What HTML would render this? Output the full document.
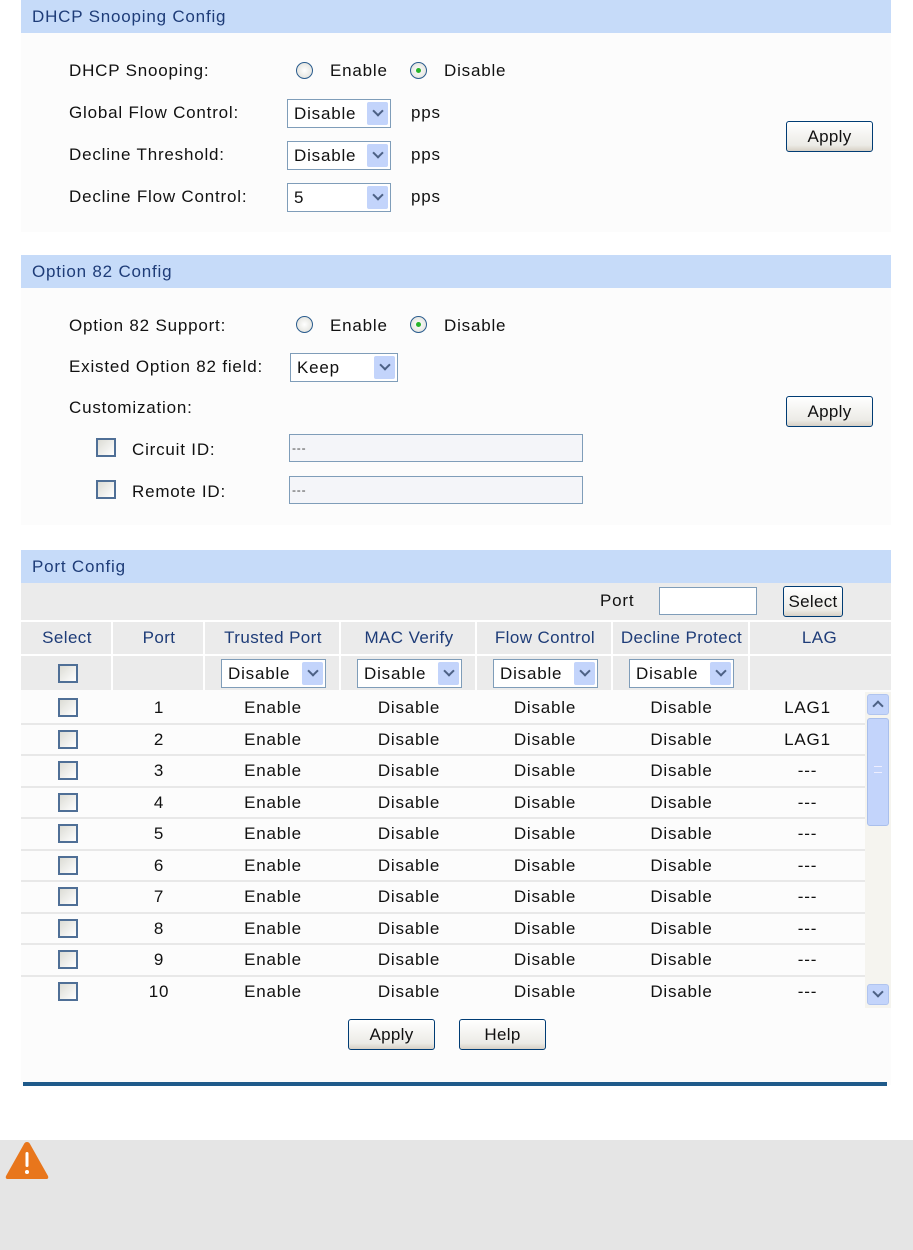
<!DOCTYPE html>
<html><head><meta charset="utf-8"><style>
*{margin:0;padding:0;box-sizing:border-box}
body{width:913px;height:1250px;background:#fff;font-family:"Liberation Sans",Arial,sans-serif;font-size:17px;letter-spacing:0.8px;color:#111;position:relative;overflow:hidden}
.a{position:absolute}
.panel{position:absolute;left:21px;width:870px;background:#fcfcfc}
.hd{position:absolute;left:21px;width:870px;height:33px;background:#c6dbf9;color:#1e3c78;font-size:17px;line-height:34px;padding-left:11px}
.lbl{position:absolute;line-height:20px;margin-top:0}
.sel{position:absolute;height:29px;border:1px solid #7f9db9;background:#fff;line-height:28px;padding-left:6px;font-size:17px}
.sel::after{content:"";position:absolute;right:2px;top:2px;width:21px;height:23px;background:#c3d4fb;border-radius:2px}
.sel i{position:absolute;right:8px;top:7px;width:8px;height:8px;border-right:2.5px solid #4d6185;border-bottom:2.5px solid #4d6185;transform:rotate(45deg);z-index:2}
.rad{position:absolute;width:17px;height:17px;border-radius:50%;border:1px solid #2a5c8e;background:radial-gradient(circle,#fff,#dcdcd5)}
.rad.on::after{content:"";position:absolute;left:5px;top:5px;width:5px;height:5px;border-radius:50%;background:#27b42a}
.btn{position:absolute;height:31px;border:1px solid #003c74;border-radius:3px;background:linear-gradient(#fff,#ecebe6 80%,#d6d0c5);text-align:center;line-height:30px;font-size:17px;letter-spacing:0.3px}
.cb{position:absolute;width:20px;height:19px;border:2px solid #4f6f96;background:linear-gradient(135deg,#dcdcd5,#fff)}
.txt{position:absolute;height:28px;border:1px solid #7f9db9;background:#f4f5f9;font-size:12px;line-height:26px;padding-left:2px;color:#444}
.th{position:absolute;background:#ebebeb;border-right:2px solid #fff}
.c{position:absolute;text-align:center;line-height:32px;height:31px}
.hl{position:absolute;height:2px;background:#e8e8e8;left:21px;width:844px}
</style></head><body>

<div class="panel" style="top:0;height:232px"></div>
<div class="hd" style="top:0">DHCP Snooping Config</div>
<div class="lbl" style="left:69px;top:61px">DHCP Snooping:</div>
<div class="rad" style="left:296px;top:62px"></div><div class="lbl" style="left:330px;top:61px">Enable</div>
<div class="rad on" style="left:410px;top:62px"></div><div class="lbl" style="left:444px;top:61px">Disable</div>
<div class="lbl" style="left:69px;top:103px">Global Flow Control:</div>
<div class="sel" style="left:287px;top:99px;width:104px">Disable<i></i></div><div class="lbl" style="left:411px;top:103px">pps</div>
<div class="lbl" style="left:69px;top:145px">Decline Threshold:</div>
<div class="sel" style="left:287px;top:141px;width:104px">Disable<i></i></div><div class="lbl" style="left:411px;top:145px">pps</div>
<div class="lbl" style="left:69px;top:187px">Decline Flow Control:</div>
<div class="sel" style="left:287px;top:183px;width:104px">5<i></i></div><div class="lbl" style="left:411px;top:187px">pps</div>
<div class="btn" style="left:786px;top:121px;width:87px">Apply</div>

<div class="panel" style="top:255px;height:270px"></div>
<div class="hd" style="top:255px">Option 82 Config</div>
<div class="lbl" style="left:69px;top:316px">Option 82 Support:</div>
<div class="rad" style="left:296px;top:316px"></div><div class="lbl" style="left:330px;top:316px">Enable</div>
<div class="rad on" style="left:410px;top:316px"></div><div class="lbl" style="left:444px;top:316px">Disable</div>
<div class="lbl" style="left:69px;top:357px">Existed Option 82 field:</div>
<div class="sel" style="left:290px;top:353px;width:108px">Keep<i></i></div>
<div class="lbl" style="left:69px;top:398px">Customization:</div>
<div class="btn" style="left:786px;top:396px;width:87px">Apply</div>
<div class="cb" style="left:96px;top:438px"></div><div class="lbl" style="left:132px;top:440px">Circuit ID:</div>
<div class="txt" style="left:289px;top:434px;width:294px">---</div>
<div class="cb" style="left:96px;top:480px"></div><div class="lbl" style="left:132px;top:482px">Remote ID:</div>
<div class="txt" style="left:289px;top:476px;width:294px">---</div>

<div class="panel" style="top:550px;height:535px"></div>
<div class="hd" style="top:550px">Port Config</div>
<div class="a" style="left:21px;top:583px;width:870px;height:37px;background:#ebebeb"></div>
<div class="lbl" style="left:600px;top:591px">Port</div>
<div class="a" style="left:659px;top:587px;width:98px;height:28px;border:1px solid #7f9db9;background:#fff"></div>
<div class="btn" style="left:783px;top:586px;width:60px;height:31px">Select</div>

<div class="a" style="left:21px;top:620px;width:870px;height:2px;background:#fff"></div>
<div class="th" style="left:21px;top:622px;width:92px;height:68px"></div>
<div class="th" style="left:113px;top:622px;width:92px;height:68px"></div>
<div class="th" style="left:205px;top:622px;width:136px;height:68px"></div>
<div class="th" style="left:341px;top:622px;width:136px;height:68px"></div>
<div class="th" style="left:477px;top:622px;width:136px;height:68px"></div>
<div class="th" style="left:613px;top:622px;width:137px;height:68px"></div>
<div class="th" style="left:750px;top:622px;width:141px;height:68px;border-right:0"></div>
<div class="a" style="left:21px;top:654px;width:870px;height:2px;background:#fff"></div>
<div class="a" style="left:21px;top:622px;width:870px;height:32px;color:#1e3c78;letter-spacing:0.4px">
<div class="c" style="left:0;width:92px">Select</div>
<div class="c" style="left:92px;width:92px">Port</div>
<div class="c" style="left:184px;width:136px">Trusted Port</div>
<div class="c" style="left:320px;width:136px">MAC Verify</div>
<div class="c" style="left:456px;width:136px">Flow Control</div>
<div class="c" style="left:592px;width:137px">Decline Protect</div>
<div class="c" style="left:729px;width:139px">LAG</div>
</div>
<div class="cb" style="left:58px;top:664px"></div>
<div class="sel" style="left:221px;top:659px;width:105px">Disable<i></i></div>
<div class="sel" style="left:357px;top:659px;width:105px">Disable<i></i></div>
<div class="sel" style="left:493px;top:659px;width:105px">Disable<i></i></div>
<div class="sel" style="left:629px;top:659px;width:105px">Disable<i></i></div>

<div class="a" style="left:21px;top:692px;width:844px;height:316px;font-size:17px">
<div class="c" style="top:0;left:92px;width:92px">1</div><div class="c" style="top:0;left:184px;width:136px">Enable</div><div class="c" style="top:0;left:320px;width:136px">Disable</div><div class="c" style="top:0;left:456px;width:136px">Disable</div><div class="c" style="top:0;left:592px;width:137px">Disable</div><div class="c" style="top:0;left:729px;width:115px">LAG1</div>
<div class="c" style="top:32px;left:92px;width:92px">2</div><div class="c" style="top:32px;left:184px;width:136px">Enable</div><div class="c" style="top:32px;left:320px;width:136px">Disable</div><div class="c" style="top:32px;left:456px;width:136px">Disable</div><div class="c" style="top:32px;left:592px;width:137px">Disable</div><div class="c" style="top:32px;left:729px;width:115px">LAG1</div>
<div class="c" style="top:63px;left:92px;width:92px">3</div><div class="c" style="top:63px;left:184px;width:136px">Enable</div><div class="c" style="top:63px;left:320px;width:136px">Disable</div><div class="c" style="top:63px;left:456px;width:136px">Disable</div><div class="c" style="top:63px;left:592px;width:137px">Disable</div><div class="c" style="top:63px;left:729px;width:115px">---</div>
<div class="c" style="top:95px;left:92px;width:92px">4</div><div class="c" style="top:95px;left:184px;width:136px">Enable</div><div class="c" style="top:95px;left:320px;width:136px">Disable</div><div class="c" style="top:95px;left:456px;width:136px">Disable</div><div class="c" style="top:95px;left:592px;width:137px">Disable</div><div class="c" style="top:95px;left:729px;width:115px">---</div>
<div class="c" style="top:126px;left:92px;width:92px">5</div><div class="c" style="top:126px;left:184px;width:136px">Enable</div><div class="c" style="top:126px;left:320px;width:136px">Disable</div><div class="c" style="top:126px;left:456px;width:136px">Disable</div><div class="c" style="top:126px;left:592px;width:137px">Disable</div><div class="c" style="top:126px;left:729px;width:115px">---</div>
<div class="c" style="top:158px;left:92px;width:92px">6</div><div class="c" style="top:158px;left:184px;width:136px">Enable</div><div class="c" style="top:158px;left:320px;width:136px">Disable</div><div class="c" style="top:158px;left:456px;width:136px">Disable</div><div class="c" style="top:158px;left:592px;width:137px">Disable</div><div class="c" style="top:158px;left:729px;width:115px">---</div>
<div class="c" style="top:189px;left:92px;width:92px">7</div><div class="c" style="top:189px;left:184px;width:136px">Enable</div><div class="c" style="top:189px;left:320px;width:136px">Disable</div><div class="c" style="top:189px;left:456px;width:136px">Disable</div><div class="c" style="top:189px;left:592px;width:137px">Disable</div><div class="c" style="top:189px;left:729px;width:115px">---</div>
<div class="c" style="top:221px;left:92px;width:92px">8</div><div class="c" style="top:221px;left:184px;width:136px">Enable</div><div class="c" style="top:221px;left:320px;width:136px">Disable</div><div class="c" style="top:221px;left:456px;width:136px">Disable</div><div class="c" style="top:221px;left:592px;width:137px">Disable</div><div class="c" style="top:221px;left:729px;width:115px">---</div>
<div class="c" style="top:252px;left:92px;width:92px">9</div><div class="c" style="top:252px;left:184px;width:136px">Enable</div><div class="c" style="top:252px;left:320px;width:136px">Disable</div><div class="c" style="top:252px;left:456px;width:136px">Disable</div><div class="c" style="top:252px;left:592px;width:137px">Disable</div><div class="c" style="top:252px;left:729px;width:115px">---</div>
<div class="c" style="top:284px;left:92px;width:92px">10</div><div class="c" style="top:284px;left:184px;width:136px">Enable</div><div class="c" style="top:284px;left:320px;width:136px">Disable</div><div class="c" style="top:284px;left:456px;width:136px">Disable</div><div class="c" style="top:284px;left:592px;width:137px">Disable</div><div class="c" style="top:284px;left:729px;width:115px">---</div>
</div>
<div class="hl" style="top:723px"></div><div class="hl" style="top:754px"></div><div class="hl" style="top:786px"></div><div class="hl" style="top:817px"></div><div class="hl" style="top:849px"></div><div class="hl" style="top:880px"></div><div class="hl" style="top:912px"></div><div class="hl" style="top:943px"></div><div class="hl" style="top:975px"></div>
<div class="cb" style="left:58px;top:698px"></div><div class="cb" style="left:58px;top:730px"></div><div class="cb" style="left:58px;top:761px"></div><div class="cb" style="left:58px;top:793px"></div><div class="cb" style="left:58px;top:824px"></div><div class="cb" style="left:58px;top:856px"></div><div class="cb" style="left:58px;top:887px"></div><div class="cb" style="left:58px;top:919px"></div><div class="cb" style="left:58px;top:950px"></div><div class="cb" style="left:58px;top:982px"></div>

<div class="a" style="left:865px;top:692px;width:26px;height:316px;background:#f5f4ef"></div>
<div class="a" style="left:867px;top:694px;width:22px;height:21px;background:#c3d4fb;border:1px solid #b0c4ef;border-radius:3px"></div>
<div class="a" style="left:874px;top:702px;width:8px;height:8px;border-left:2.5px solid #4d6185;border-top:2.5px solid #4d6185;transform:rotate(45deg)"></div>
<div class="a" style="left:867px;top:718px;width:22px;height:108px;background:#c3d4fb;border:1px solid #a9bfec;border-radius:3px"></div>
<div class="a" style="left:874px;top:766px;width:8px;height:7px;border-top:1px solid #eef;border-bottom:1px solid #eef"></div>
<div class="a" style="left:867px;top:984px;width:22px;height:21px;background:#c3d4fb;border:1px solid #b0c4ef;border-radius:3px"></div>
<div class="a" style="left:874px;top:988px;width:8px;height:8px;border-right:2.5px solid #4d6185;border-bottom:2.5px solid #4d6185;transform:rotate(45deg)"></div>

<div class="btn" style="left:348px;top:1019px;width:87px">Apply</div>
<div class="btn" style="left:459px;top:1019px;width:87px">Help</div>
<div class="a" style="left:23px;top:1082px;width:864px;height:4px;background:#1f5a8a"></div>

<div class="a" style="left:0;top:1140px;width:913px;height:110px;background:#e5e5e5"></div>
<svg class="a" style="left:4px;top:1140px" width="46" height="42" viewBox="0 0 46 42"><path d="M23 2 Q25 2 26 4 L44 36 Q45 39 42 39 L4 39 Q1 39 2 36 L20 4 Q21 2 23 2Z" fill="#e8761c"/><rect x="21.5" y="12" width="3" height="15" rx="1.5" fill="#fff"/><circle cx="23" cy="32" r="2" fill="#fff"/></svg>
</body></html>
